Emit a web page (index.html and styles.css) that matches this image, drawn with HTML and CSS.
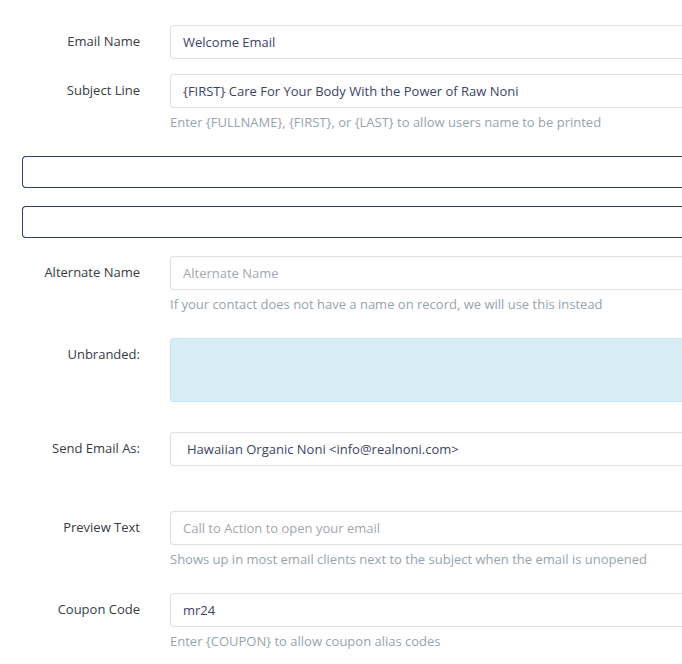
FILE: index.html
```html
<!DOCTYPE html>
<html>
<head>
<meta charset="utf-8">
<link rel="stylesheet" href="styles.css">
</head>
<body>
<form class="form">
  <div class="group">
    <label class="label">Email Name</label>
    <div class="field"><div class="input value">Welcome Email</div></div>
  </div>
  <div class="group">
    <label class="label">Subject Line</label>
    <div class="field">
      <div class="input value">{FIRST} Care For Your Body With the Power of Raw Noni</div>
      <p class="help">Enter {FULLNAME}, {FIRST}, or {LAST} to allow users name to be printed</p>
    </div>
  </div>
  <div class="dark-box"></div>
  <div class="dark-box"></div>
  <div class="group">
    <label class="label">Alternate Name</label>
    <div class="field">
      <div class="input placeholder">Alternate Name</div>
      <p class="help">If your contact does not have a name on record, we will use this instead</p>
    </div>
  </div>
  <div class="group group-wide">
    <label class="label">Unbranded:</label>
    <div class="field"><div class="alert-info"></div></div>
  </div>
  <div class="group group-loose">
    <label class="label">Send Email As:</label>
    <div class="field"><div class="input select value">Hawaiian Organic Noni &lt;info@realnoni.com&gt;</div></div>
  </div>
  <div class="group">
    <label class="label">Preview Text</label>
    <div class="field">
      <div class="input placeholder">Call to Action to open your email</div>
      <p class="help">Shows up in most email clients next to the subject when the email is unopened</p>
    </div>
  </div>
  <div class="group">
    <label class="label">Coupon Code</label>
    <div class="field">
      <div class="input value">mr24</div>
      <p class="help">Enter {COUPON} to allow coupon alias codes</p>
    </div>
  </div>
</form>
</body>
</html>
```

FILE: styles.css
```css
html, body {
  margin: 0;
  padding: 0;
  background: #ffffff;
  overflow: hidden;
}
body {
  font-family: "Open Sans", "Liberation Sans", sans-serif;
  font-size: 13px;
  line-height: 18px;
  color: #3c3f47;
}
.form {
  width: 100%;
  padding-top: 25px;
}
.group {
  display: grid;
  grid-template-columns: 155px 1fr;
  margin-bottom: 15px;
}
.group-wide {
  margin-bottom: 30px;
}
.group-loose {
  margin-bottom: 45px;
}
.label {
  text-align: right;
  padding-right: 15px;
  padding-top: 7px;
  color: #383b43;
}
.field {
  padding-left: 15px;
  min-width: 0;
}
.input {
  box-sizing: border-box;
  height: 34px;
  border: 1px solid #dcdfe3;
  border-right: 0;
  border-radius: 4px 0 0 4px;
  padding: 7px 12px;
  background: #fff;
  white-space: nowrap;
  overflow: hidden;
}
.value {
  color: #3c4466;
}
.placeholder {
  color: #a2a7ae;
}
.select {
  padding-left: 16px;
}
.help {
  margin: 5px 0 10px;
  color: #98a3ab;
}
.dark-box {
  box-sizing: border-box;
  height: 32px;
  margin: 0 0 18px 22px;
  border: 1px solid #2f3b62;
  border-right: 0;
  border-radius: 4px 0 0 4px;
}
.alert-info {
  box-sizing: border-box;
  height: 64px;
  background: #d9edf7;
  border: 1px solid #bce8f1;
  border-right: 0;
  border-radius: 4px 0 0 4px;
}
```
